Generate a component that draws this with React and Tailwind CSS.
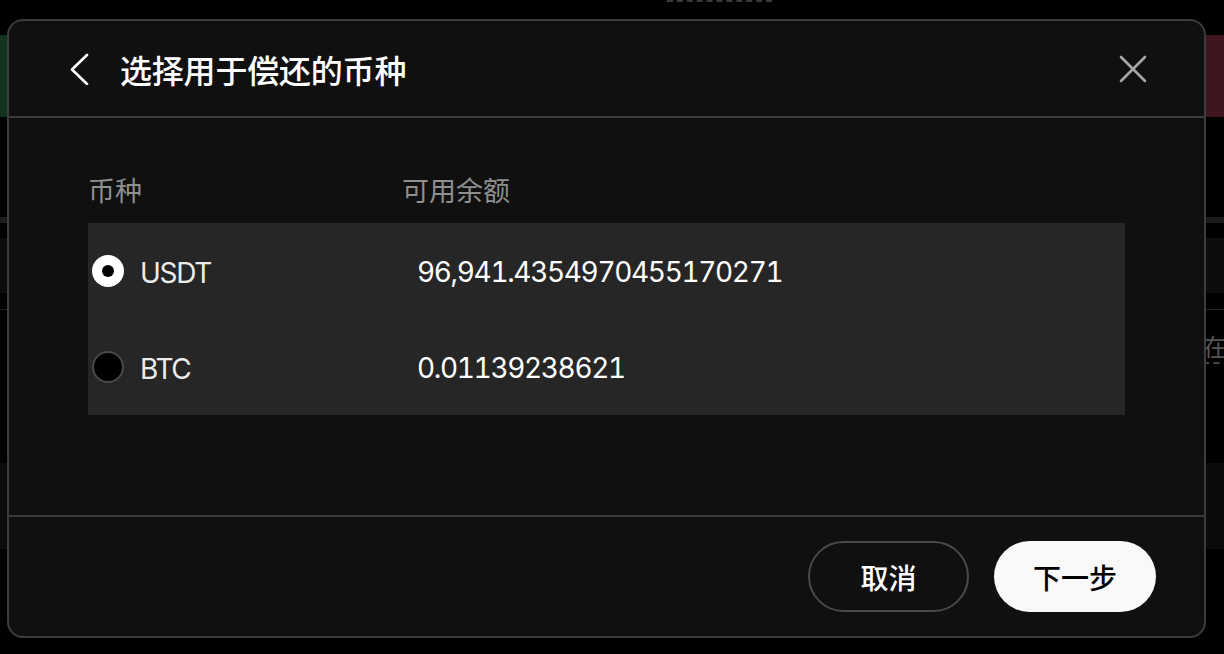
import React from "react";

const cjk = { fontFamily: '"Noto Sans CJK SC", "Noto Sans", sans-serif' };

function Radio({ checked }) {
  if (checked) {
    return (
      <div className="w-[32px] h-[32px] rounded-full bg-white flex items-center justify-center shrink-0">
        <div className="w-[12px] h-[12px] rounded-full bg-black" />
      </div>
    );
  }
  return <div className="w-[32px] h-[32px] rounded-full bg-black border-2 border-[#4a4a4a] shrink-0" />;
}

function Row({ coin, amount, checked }) {
  return (
    <div className="h-[96px] flex items-center pl-[4px]">
      <div className="w-[325px] flex items-center gap-[16px]">
        <Radio checked={checked} />
        <span className="text-[28px] text-[#ececec] tracking-[-1.3px] font-['Inter',sans-serif] mt-[4px]">{coin}</span>
      </div>
      <span className="text-[28px] text-white font-['Inter',sans-serif] tabular-nums tracking-[-1.35px] mt-[1px]">{amount}</span>
    </div>
  );
}

export default function App() {
  return (
    <div className="relative w-full h-[654px] bg-black overflow-hidden" style={cjk}>
      {/* underlying page */}
      <div className="flex flex-col">
        <div className="ml-[667px] w-[105px] h-[2px] border-t-2 border-dashed border-[#3a3a3a]" />
        <div className="h-[33px]" />
        <div className="h-[82px] flex justify-between">
          <div className="w-[400px] bg-[#12341f]" />
          <div className="w-[400px] bg-[#3e1620]" />
        </div>
        <div className="h-[100px]" />
        <div className="h-[6px] bg-[#1c1c1c]" />
        <div className="h-[15px]" />
        <div className="h-[55px] bg-[#0d0d0d]" />
        <div className="h-[16px]" />
        <div className="h-[1px] bg-[#222]" />
        <div className="h-[54px] pl-[1203px] flex items-start whitespace-nowrap">
          <span className="text-[24px] leading-[32px] mt-[20px] text-[#555] border-b-2 border-dashed border-[#444]">在线</span>
        </div>
        <div className="h-[99px]" />
        <div className="h-[86px] bg-[#0b0b0b]" />
      </div>

      {/* modal */}
      <div className="absolute left-[7px] top-[19px] w-[1199px] h-[619px] rounded-[16px] border-2 border-[#3c3c3c] bg-[#101010] flex flex-col">
        <div className="h-[97px] border-b-2 border-[#3a3a3a] flex items-center pl-[60px] pr-[57px]">
          <svg width="20" height="32" viewBox="0 0 20 32" fill="none" className="shrink-0">
            <path d="M18 2 L3 16.5 L18 31" stroke="#ffffff" strokeWidth="2.6" strokeLinecap="round" strokeLinejoin="round" />
          </svg>
          <h1 className="ml-[31px] text-[32px] font-medium text-white leading-none tracking-[-0.2px]">选择用于偿还的币种</h1>
          <div className="flex-1" />
          <svg width="28" height="28" viewBox="0 0 28 28" fill="none" className="shrink-0">
            <path d="M2 2 L26 26 M26 2 L2 26" stroke="#a6a6a6" strokeWidth="2.6" strokeLinecap="round" />
          </svg>
        </div>

        <div className="flex-1 px-[79px] pt-[54px]">
          <div className="h-[36px] flex items-center text-[27px] text-[#8f8f8f]">
            <span className="w-[314px]">币种</span>
            <span>可用余额</span>
          </div>
          <div className="mt-[15px] bg-[#262626] flex flex-col">
            <Row coin="USDT" amount="96,941.4354970455170271" checked />
            <Row coin="BTC" amount="0.01139238621" />
          </div>
        </div>

        <div className="h-[121px] border-t-2 border-[#3a3a3a] flex items-center justify-end gap-[25px] pr-[48px]">
          <button className="w-[161px] h-[71px] rounded-full border-2 border-[#4a4a4a] text-[28px] text-white font-medium">取消</button>
          <button className="w-[162px] h-[71px] rounded-full bg-[#f9f9f9] text-[28px] text-black font-medium">下一步</button>
        </div>
      </div>
    </div>
  );
}
